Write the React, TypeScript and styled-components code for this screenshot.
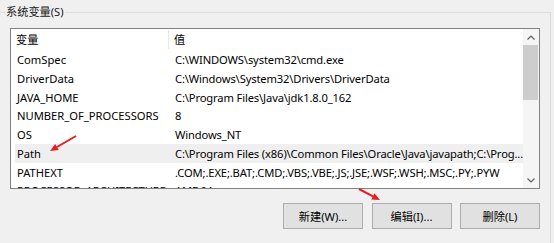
import styled, { createGlobalStyle } from 'styled-components';

const GlobalStyle = createGlobalStyle`
  body {
    margin: 0;
    background: #f0f0f0;
  }
`;

const Page = styled.div`
  position: relative;
  width: 554px;
  height: 243px;
  overflow: hidden;
  background: #f0f0f0;
  font-family: 'Noto Sans', 'Noto Sans CJK SC', sans-serif;
  font-size: 11.2px;
  color: #000;
`;

const GroupBox = styled.fieldset`
  margin: 4px 3px 0 0;
  padding: 0;
  min-width: 0;
  height: 300px;
  border: 1px solid #dcdcdc;
  border-left: none;
  border-bottom: none;
`;

const Legend = styled.legend`
  margin-left: 5px;
  padding: 0 1px;
  line-height: 16px;
  color: #1a1a1a;
`;

const Content = styled.div`
  padding: 0 10px;
`;

const ListBox = styled.div`
  box-sizing: border-box;
  margin-top: 8px;
  height: 161px;
  border: 1px solid #828282;
  background: #fff;
  display: flex;
`;

const Table = styled.div`
  flex: 1;
  padding-left: 4px;
  overflow: hidden;
`;

const HeaderRow = styled.div`
  display: flex;
  height: 21px;
  align-items: center;
`;

const HeadCell = styled.div<{ $first?: boolean }>`
  box-sizing: border-box;
  height: 19px;
  line-height: 19px;
  padding-left: ${(p) => (p.$first ? '1px' : '5px')};
  width: ${(p) => (p.$first ? '154px' : 'auto')};
  border-right: ${(p) => (p.$first ? '1px solid #e5e5e5' : 'none')};
`;

const Row = styled.div<{ $selected?: boolean }>`
  display: grid;
  grid-template-columns: 158px 1fr;
  height: 18.75px;
  line-height: 19.5px;
  background: ${(p) => (p.$selected ? '#efefef' : 'transparent')};
  white-space: nowrap;
`;

const Cell = styled.div<{ $value?: boolean }>`
  padding-left: 2px;
  overflow: hidden;
  letter-spacing: ${(p) => (p.$value ? '-0.14px' : '0')};
`;

const ScrollBar = styled.div`
  width: 16px;
  display: flex;
  flex-direction: column;
  background: #f5f5f5;
`;

const ScrollArrow = styled.div`
  height: 16px;
  display: flex;
  align-items: center;
  justify-content: center;
`;

const Thumb = styled.div`
  height: 55px;
  margin: 0 1px 0 0;
  background: #cdcdcd;
`;

const Track = styled.div`
  flex: 1;
`;

const ButtonRow = styled.div`
  display: flex;
  justify-content: flex-end;
  gap: 8.5px;
  margin-top: 14px;
`;

const Button = styled.button`
  box-sizing: border-box;
  width: 80px;
  height: 26px;
  padding: 0;
  border: 1px solid #adadad;
  background: #e1e1e1;
  font-family: inherit;
  font-size: 11.2px;
  color: #000;
`;

const Overlay = styled.svg`
  position: absolute;
  left: 0;
  top: 0;
  pointer-events: none;
`;

const rows = [
  ['ComSpec', 'C:\\WINDOWS\\system32\\cmd.exe'],
  ['DriverData', 'C:\\Windows\\System32\\Drivers\\DriverData'],
  ['JAVA_HOME', 'C:\\Program Files\\Java\\jdk1.8.0_162'],
  ['NUMBER_OF_PROCESSORS', '8'],
  ['OS', 'Windows_NT'],
  ['Path', 'C:\\Program Files (x86)\\Common Files\\Oracle\\Java\\javapath;C:\\Prog...'],
  ['PATHEXT', '.COM;.EXE;.BAT;.CMD;.VBS;.VBE;.JS;.JSE;.WSF;.WSH;.MSC;.PY;.PYW'],
  ['PROCESSOR_ARCHITECTURE', 'AMD64'],
];

const Chevron = ({ up }: { up?: boolean }) => (
  <svg width="8" height="5" viewBox="0 0 8 5">
    <path
      d={up ? 'M0.5 4.5 L4 1 L7.5 4.5' : 'M0.5 0.5 L4 4 L7.5 0.5'}
      fill="none"
      stroke="#606060"
      strokeWidth="1.2"
    />
  </svg>
);

const App = () => {
  return (
    <Page>
      <GlobalStyle />
      <GroupBox>
        <Legend>系统变量(S)</Legend>
        <Content>
          <ListBox>
            <Table>
              <HeaderRow>
                <HeadCell $first>变量</HeadCell>
                <HeadCell>值</HeadCell>
              </HeaderRow>
              {rows.map(([name, value]) => (
                <Row key={name} $selected={name === 'Path'}>
                  <Cell>{name}</Cell>
                  <Cell $value>{value}</Cell>
                </Row>
              ))}
            </Table>
            <ScrollBar>
              <ScrollArrow>
                <Chevron up />
              </ScrollArrow>
              <Thumb />
              <Track />
              <ScrollArrow>
                <Chevron />
              </ScrollArrow>
            </ScrollBar>
          </ListBox>
          <ButtonRow>
            <Button>新建(W)...</Button>
            <Button>编辑(I)...</Button>
            <Button>删除(L)</Button>
          </ButtonRow>
        </Content>
      </GroupBox>
      <Overlay width="554" height="243" viewBox="0 0 554 243">
        <line x1="76" y1="136" x2="57" y2="147" stroke="#e31e24" strokeWidth="2" />
        <polygon points="50,151 58.7,150 55.2,144" fill="#e31e24" />
        <line x1="359" y1="189" x2="373" y2="196.3" stroke="#e31e24" strokeWidth="2" />
        <polygon points="380,200 371.3,199.4 374.5,193.2" fill="#e31e24" />
      </Overlay>
    </Page>
  );
};

export default App;
